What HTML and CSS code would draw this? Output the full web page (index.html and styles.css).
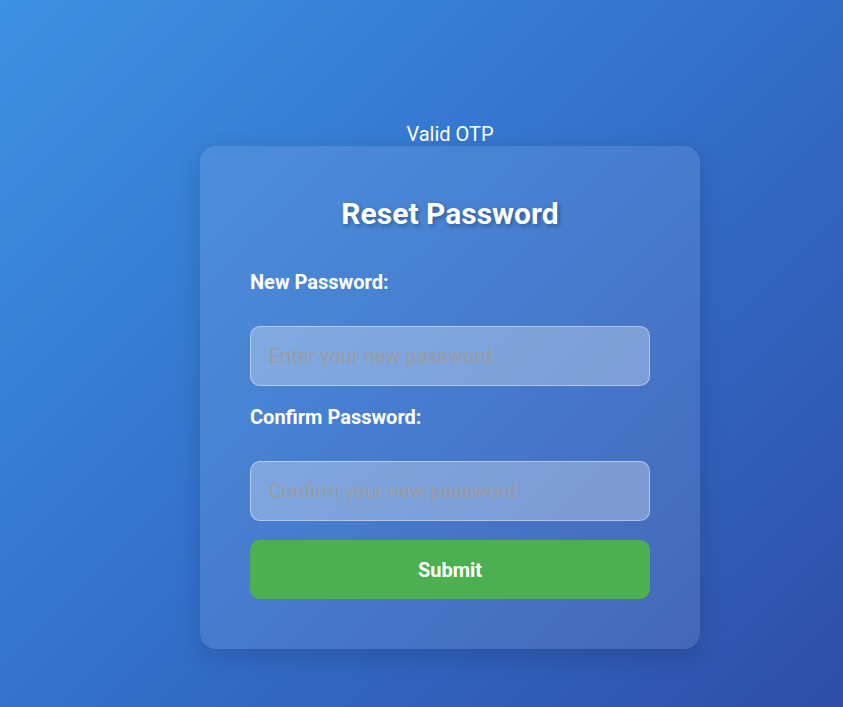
FILE: index.html
```html
<!DOCTYPE html>
<html lang="en">
<head>
<meta charset="utf-8">
<title>Reset Password</title>
<link rel="stylesheet" href="styles.css">
</head>
<body>
<main class="page">
  <p class="status">Valid OTP</p>
  <form class="card">
    <h2 class="title">Reset Password</h2>
    <label class="label" for="np">New Password:</label>
    <input class="field" id="np" type="password" placeholder="Enter your new password">
    <label class="label" for="cp">Confirm Password:</label>
    <input class="field" id="cp" type="password" placeholder="Confirm your new password">
    <button class="submit" type="button">Submit</button>
  </form>
</main>
</body>
</html>
```

FILE: styles.css
```css
* { box-sizing: border-box; }
html, body { margin: 0; padding: 0; }
body {
  min-height: 707px;
  background: linear-gradient(135deg, #3d91e3 0%, #3370cb 50%, #2e4ea8 100%);
  font-family: Roboto, "Liberation Sans", sans-serif;
  color: #fff;
}
.page {
  display: flex;
  flex-direction: column;
  align-items: center;
  padding-top: 122px;
  padding-left: 57px;
}
.status {
  margin: 0;
  font-size: 20px;
  line-height: 24px;
  height: 24px;
}
.card {
  width: 500px;
  padding: 50px;
  border-radius: 16px;
  background: rgba(255, 255, 255, 0.1);
  box-shadow: 0 8px 24px rgba(0, 0, 0, 0.15);
  display: flex;
  flex-direction: column;
}
.title {
  margin: 0 0 38px;
  text-align: center;
  font-size: 30px;
  line-height: 36px;
  font-weight: 700;
  text-shadow: 2px 2px 4px rgba(0, 0, 0, 0.3);
}
.label {
  font-size: 20px;
  line-height: 24px;
  font-weight: 700;
  margin-bottom: 32px;
}
.field {
  height: 60px;
  padding: 0 18px;
  border: 1px solid rgba(255, 255, 255, 0.4);
  border-radius: 10px;
  background: rgba(255, 255, 255, 0.3);
  font-family: Roboto, "Liberation Sans", sans-serif;
  font-size: 20px;
  color: #333;
  margin-bottom: 19px;
  outline: none;
}
.field::placeholder { color: #999da3; }
.submit {
  height: 59px;
  border: none;
  border-radius: 10px;
  background: #4caf50;
  color: #fff;
  font-family: Roboto, "Liberation Sans", sans-serif;
  font-size: 20px;
  font-weight: 700;
}
```
